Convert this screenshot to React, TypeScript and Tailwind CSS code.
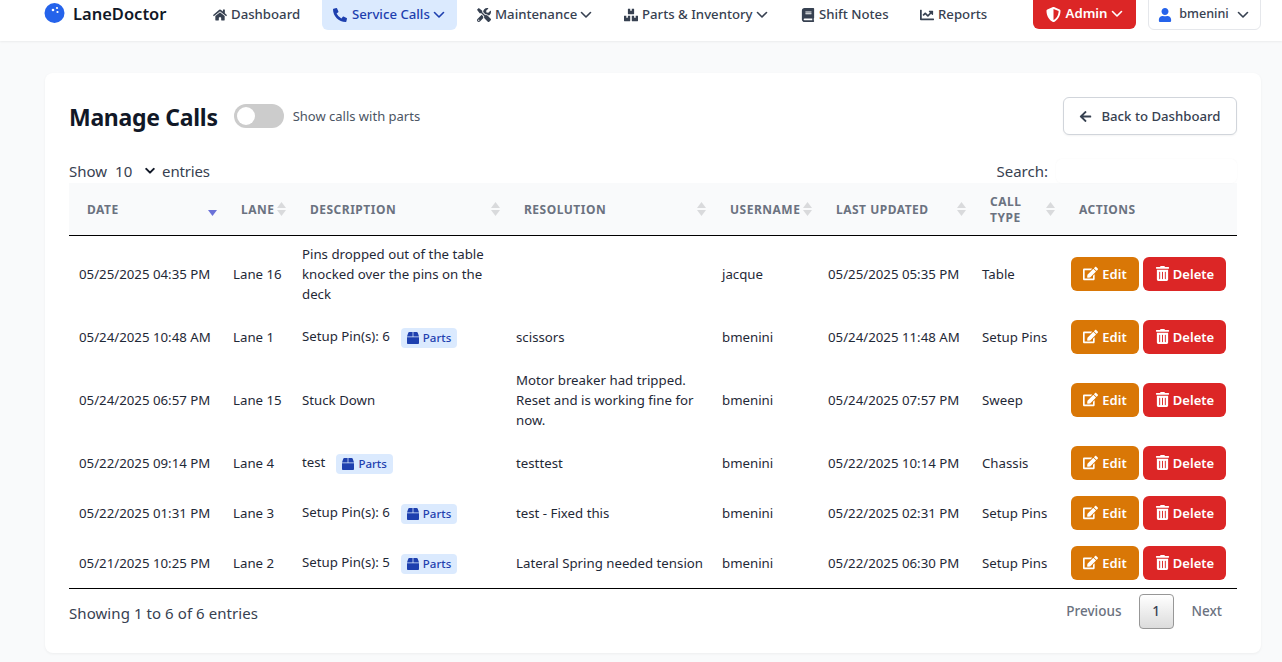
import React from "react";
import {
  FaHome, FaPhoneAlt, FaTools, FaBoxes, FaBook, FaChartLine, FaShieldAlt,
  FaUser, FaArrowLeft, FaEdit, FaTrashAlt, FaBox,
} from "react-icons/fa";

const rows = [
  { date: "05/25/2025 04:35 PM", lane: "Lane 16", desc: "Pins dropped out of the table knocked over the pins on the deck", parts: false, res: "", user: "jacque", upd: "05/25/2025 05:35 PM", type: "Table" },
  { date: "05/24/2025 10:48 AM", lane: "Lane 1", desc: "Setup Pin(s): 6", parts: true, res: "scissors", user: "bmenini", upd: "05/24/2025 11:48 AM", type: "Setup Pins" },
  { date: "05/24/2025 06:57 PM", lane: "Lane 15", desc: "Stuck Down", parts: false, res: "Motor breaker had tripped. Reset and is working fine for now.", user: "bmenini", upd: "05/24/2025 07:57 PM", type: "Sweep" },
  { date: "05/22/2025 09:14 PM", lane: "Lane 4", desc: "test", parts: true, res: "testtest", user: "bmenini", upd: "05/22/2025 10:14 PM", type: "Chassis" },
  { date: "05/22/2025 01:31 PM", lane: "Lane 3", desc: "Setup Pin(s): 6", parts: true, res: "test - Fixed this", user: "bmenini", upd: "05/22/2025 02:31 PM", type: "Setup Pins" },
  { date: "05/21/2025 10:25 PM", lane: "Lane 2", desc: "Setup Pin(s): 5", parts: true, res: "Lateral Spring needed tension", user: "bmenini", upd: "05/22/2025 06:30 PM", type: "Setup Pins" },
];

function Chevron({ className }: { className?: string }) {
  return (
    <svg width="12" height="12" viewBox="0 0 12 12" fill="none" stroke="currentColor" strokeWidth="1.6" strokeLinecap="round" strokeLinejoin="round" className={className}>
      <path d="M1.5 3.5 L6 8 L10.5 3.5" />
    </svg>
  );
}

function Sort({ active }: { active?: boolean }) {
  return (
    <span className="absolute right-[6px] top-[19px] flex flex-col gap-[2px]">
      <svg width="9" height="6" viewBox="0 0 9 6" className={active ? "opacity-0" : ""}><path d="M4.5 0L9 6H0z" fill="#d9dadc" /></svg>
      <svg width="9" height="6" viewBox="0 0 9 6"><path d="M0 0h9L4.5 6z" fill={active ? "#6b72d8" : "#d9dadc"} /></svg>
    </span>
  );
}

function Th({ children, w, sort, active }: { children: React.ReactNode; w: string; sort?: boolean; active?: boolean }) {
  return (
    <th className={`${w} relative h-[52px] pl-[18px] pr-[18px] pt-[2px] text-left align-middle text-xs font-bold tracking-[0.5px] uppercase leading-4 text-[#6b7280]`}>
      {children}
      {sort && <Sort active={active} />}
    </th>
  );
}

function NavItem({ icon, label, chevron }: { icon: React.ReactNode; label: string; chevron?: boolean }) {
  return (
    <div className="flex items-center h-[29px] text-[13.2px] font-medium text-[#374151] whitespace-nowrap">
      <span className="mr-[4px] text-[14px] text-[#374151]">{icon}</span>
      <span>{label}</span>
      {chevron && <Chevron className="ml-[3px]" />}
    </div>
  );
}

export default function App() {
  return (
    <div className="bg-[#f9fafb] font-['Noto_Sans',sans-serif] text-[#111827] overflow-hidden h-[662px]">
      <nav className="h-[41px] bg-white shadow-[0_1px_2px_rgba(0,0,0,0.06)] flex items-start pl-[44px] pr-[21px]">
        <div className="flex items-center h-[28px] w-[169px]">
          <svg width="21" height="20" viewBox="0 0 21 20" className="mr-[8px] -mt-[3px]">
            <ellipse cx="10.5" cy="10" rx="10" ry="10" fill="#2563eb" />
            <circle cx="9" cy="7" r="1.3" fill="#fff" /><circle cx="13" cy="5" r="1.1" fill="#fff" /><circle cx="13.5" cy="9" r="1.1" fill="#fff" />
          </svg>
          <span className="text-[16.5px] font-semibold text-[#111827]">LaneDoctor</span>
        </div>
        <div className="flex items-start">
          <div className="w-[109px]"><NavItem icon={<FaHome />} label="Dashboard" /></div>
          <div className="w-[135px] h-[40px] -mt-[10px] pt-[10px] px-[11px] rounded-md bg-[#dbeafe] text-[#1e40af] flex items-center">
            <div className="flex items-center text-[13.2px] font-medium text-[#1e40af] whitespace-nowrap">
              <FaPhoneAlt className="mr-[5px] text-[14px]" />
              <span>Service Calls</span>
              <Chevron className="ml-[3px]" />
            </div>
          </div>
          <div className="ml-[20px] w-[147px]"><NavItem icon={<FaTools />} label="Maintenance" chevron /></div>
          <div className="w-[177px]"><NavItem icon={<FaBoxes />} label="Parts & Inventory" chevron /></div>
          <div className="w-[119px]"><NavItem icon={<FaBook />} label="Shift Notes" /></div>
          <div className="w-[113px]"><NavItem icon={<FaChartLine />} label="Reports" /></div>
        </div>
        <div className="w-[103px] h-[39px] -mt-[10px] pt-[9px] rounded-md bg-[#dc2626] text-white flex items-center justify-center text-[13.2px] font-semibold">
          <FaShieldAlt className="mr-[5px] text-[15px]" />Admin<Chevron className="ml-[4px]" />
        </div>
        <div className="ml-[12px] w-[113px] h-[40px] -mt-[10px] pt-[9px] pr-[2px] rounded-md bg-white border border-[#e5e7eb] flex items-center justify-center text-[12.6px] font-medium text-[#374151]">
          <FaUser className="mr-[7px] text-[14px] text-[#2563eb]" />bmenini<Chevron className="ml-[8px]" />
        </div>
      </nav>

      <main className="pl-[45px] pr-[21px] pt-[32px]">
        <div className="bg-white rounded-lg shadow-[0_1px_3px_rgba(0,0,0,0.05)] h-[580px] px-[24px] pt-[24px]">
          <div className="flex items-center justify-between h-[38px]">
            <div className="flex items-center">
              <h1 className="text-[23px] tracking-[-0.3px] font-bold text-[#111827] mt-[3px]">Manage Calls</h1>
              <span className="ml-[16px] relative w-[50px] h-[24px] rounded-full bg-[#cccccc]">
                <span className="absolute left-[3px] top-[3px] w-[18px] h-[18px] rounded-full bg-white" />
              </span>
              <span className="ml-[9px] pt-[2px] text-[13px] text-[#4b5563]">Show calls with parts</span>
            </div>
            <button className="w-[174px] h-[38px] pt-[1px] flex items-center justify-center rounded-md border border-[#d1d5db] bg-white text-[13.2px] font-medium text-[#374151] shadow-[0_1px_2px_rgba(0,0,0,0.05)]">
              <FaArrowLeft className="mr-[9px] text-[13px]" />Back to Dashboard
            </button>
          </div>

          <div className="flex items-center justify-between h-[26px] mt-[23px] text-[15px] text-[#374151]">
            <div className="flex items-center">
              Show
              <span className="ml-[8px] mr-[7px] w-[40px] h-[22px] flex items-center justify-between">
                <span>10</span>
                <Chevron className="text-[#111827] w-[10px] h-[10px] stroke-[2.4px]" />
              </span>
              <span className="tracking-[-0.15px]">entries</span>
            </div>
            <div className="flex items-center">
              Search:
              <span className="ml-[8px] w-[181px] h-[24px] rounded-md bg-white shadow-[0_0_2px_rgba(0,0,0,0.04)]" />
            </div>
          </div>

          <table className="w-[1168px] mt-[-1px] border-collapse table-fixed">
            <thead>
              <tr className="bg-[#f9fafb] border-b border-black">
                <Th w="w-[154px]" sort active>Date</Th>
                <Th w="w-[69px]" sort>Lane</Th>
                <Th w="w-[214px]" sort>Description</Th>
                <Th w="w-[206px]" sort>Resolution</Th>
                <Th w="w-[106px]" sort>Username</Th>
                <Th w="w-[154px]" sort>Last Updated</Th>
                <Th w="w-[89px]" sort>Call Type</Th>
                <Th w="w-[176px]">Actions</Th>
              </tr>
            </thead>
            <tbody className="text-[13.25px] leading-5 text-[#1f2937]">
              {rows.map((r) => (
                <tr key={r.date} className="align-middle">
                  <td className="px-[10px] py-[8px] whitespace-nowrap">{r.date}</td>
                  <td className="px-[10px] py-[8px] whitespace-nowrap">{r.lane}</td>
                  <td className="px-[10px] py-[8px]">
                    {r.desc}
                    {r.parts && (
                      <span className="ml-[11px] inline-flex items-center h-[20px] px-[6px] rounded bg-[#dbeafe] text-[#1e40af] text-[11.5px] font-medium align-middle relative top-[1px]">
                        <FaBox className="mr-[4px] text-[12px]" />Parts
                      </span>
                    )}
                  </td>
                  <td className="pl-[10px] pr-[2px] py-[8px]">{r.res}</td>
                  <td className="px-[10px] py-[8px]">{r.user}</td>
                  <td className="px-[10px] py-[8px] whitespace-nowrap">{r.upd}</td>
                  <td className="px-[10px] py-[8px] whitespace-nowrap">{r.type}</td>
                  <td className="px-[10px] py-[8px]">
                    <div className="flex gap-[4px]">
                      <button className="w-[68px] h-[34px] rounded-md bg-[#d97706] text-white text-[13px] font-semibold flex items-center justify-center">
                        <FaEdit className="mr-[4px] text-[15px]" />Edit
                      </button>
                      <button className="w-[83px] h-[34px] rounded-md bg-[#dc2626] text-white text-[13px] font-semibold flex items-center justify-center">
                        <FaTrashAlt className="mr-[3px] text-[15px]" />Delete
                      </button>
                    </div>
                  </td>
                </tr>
              ))}
            </tbody>
          </table>
          <div className="border-t border-black flex items-center justify-between h-[48px] text-[15px] text-[#374151]">
            <span className="mt-[3px] tracking-[0.07px]">Showing 1 to 6 of 6 entries</span>
            <div className="flex items-center text-[13.5px] font-medium text-[#6b7280] pr-[15px] -mt-[2px]">
              <span className="mr-[17px]">Previous</span>
              <span className="w-[35px] h-[35px] flex items-center justify-center rounded-sm border border-[#979797] bg-gradient-to-b from-white to-[#dcdcdc] text-[#374151]">1</span>
              <span className="ml-[18px]">Next</span>
            </div>
          </div>
        </div>
      </main>
    </div>
  );
}
